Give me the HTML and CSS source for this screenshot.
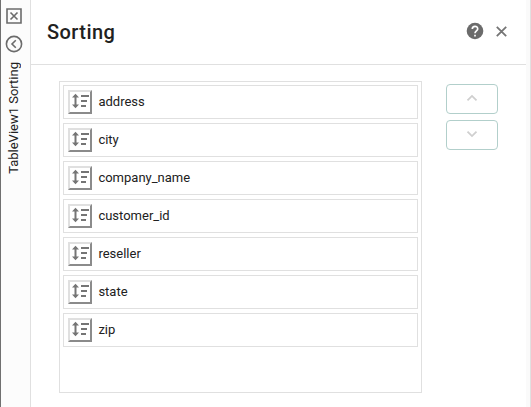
FILE: index.html
```html
<!DOCTYPE html>
<html lang="en">
<head>
<meta charset="utf-8">
<title>Sorting</title>
<link rel="stylesheet" href="styles.css">
</head>
<body>
<svg class="defs" aria-hidden="true">
  <symbol id="sort" viewBox="0 0 20 20">
    <path d="M5.500 3v12" fill="none" stroke="currentColor" stroke-width="2"/>
    <path d="M5.500 1.800L9 5.600H2zM5.500 16.200L9 12.400H2z" fill="currentColor"/>
    <path d="M11 4h8M11 9h6M11 14h5" fill="none" stroke="currentColor" stroke-width="2"/>
  </symbol>
</svg>
<div class="app">
  <aside class="rail">
    <svg class="rail-icon" width="18" height="18" viewBox="0 0 18 18"><path d="M2 2h14v14H2zM5.500 5.500l7 7M12.500 5.500l-7 7"/></svg>
    <svg class="rail-icon" width="18" height="18" viewBox="0 0 18 18"><circle cx="9" cy="9" r="7.600"/><path d="M10.800 5.200L7 9l3.800 3.800"/></svg>
    <span class="rail-title">TableView1 Sorting</span>
  </aside>
  <main class="panel">
    <header class="header">
      <h1>Sorting</h1>
      <svg class="help" width="18" height="18" viewBox="0 0 18 18"><circle cx="9" cy="9" r="8.300" fill="currentColor"/><path d="M6.300 7.100C6.300 3.400 11.700 3.400 11.700 6.900C11.700 8.900 9 8.900 9 11.300M9 12.700v1.900" fill="none" stroke="#fff" stroke-width="1.700"/></svg>
      <svg class="close" width="12" height="12" viewBox="0 0 12 12"><path d="M.8 1.800l9.400 9.400M10.200 1.800L.8 11.200"/></svg>
    </header>
    <div class="content">
      <ul class="list">
        <li><button class="sort"><svg><use href="#sort"/></svg></button>address</li>
        <li><button class="sort"><svg><use href="#sort"/></svg></button>city</li>
        <li><button class="sort"><svg><use href="#sort"/></svg></button>company_name</li>
        <li><button class="sort"><svg><use href="#sort"/></svg></button>customer_id</li>
        <li><button class="sort"><svg><use href="#sort"/></svg></button>reseller</li>
        <li><button class="sort"><svg><use href="#sort"/></svg></button>state</li>
        <li><button class="sort"><svg><use href="#sort"/></svg></button>zip</li>
      </ul>
      <div class="moves">
        <button class="move"><svg width="12" height="8" viewBox="0 0 12 8"><path d="M1.500 6.300L6 1.900l4.500 4.400"/></svg></button>
        <button class="move"><svg width="12" height="8" viewBox="0 0 12 8"><path d="M1.500 1.700L6 6.100l4.500-4.400"/></svg></button>
      </div>
    </div>
  </main>
</div>
</body>
</html>
```
FILE: styles.css
```css
* { box-sizing: border-box; }
body { margin: 0; background: #fafafa; color: #212121; font: 13px/20px Roboto, sans-serif; }
.defs { display: none; }
.app { display: flex; height: 407px; border-left: 1px solid #707070; border-right: 1px solid #e0e0e0; overflow: hidden; }
.rail { display: flex; flex-direction: column; align-items: center; gap: 10px; width: 30px; padding: 7px 4px 0 0; border-right: 1px solid #e0e0e0; background: #fcfcfc; }
.rail-icon { flex: none; fill: none; stroke: #6b6b6b; stroke-width: 1.6; }
.rail-title { margin: -1px 0 0 1px; writing-mode: vertical-rl; transform: rotate(180deg); font-size: 13px; line-height: 18px; white-space: nowrap; }
.panel { width: 495px; background: #fff; }
.header { display: flex; align-items: center; height: 65px; padding: 0 18px 2px 16px; border-bottom: 1px solid #e0e0e0; }
h1 { flex: 1; margin: 0; padding-top: 3px; font-size: 20px; font-weight: 500; line-height: 25px; letter-spacing: .45px; }
.help { color: #6b6b6b; margin-right: 12px; }
.close { fill: none; stroke: #757575; stroke-width: 1.8; }
.content { display: flex; align-items: flex-start; gap: 24px; padding: 16px 0 0 28px; }
.list { display: flex; flex-direction: column; gap: 4px; width: 363px; height: 312px; margin: 0; padding: 3px; border: 1px solid #e0e0e0; list-style: none; }
.list li { display: flex; align-items: center; gap: 6.4px; height: 34px; padding: 0 4px; border: 1px solid #e0e0e0; }
.sort { width: 24px; height: 24px; padding: 0; border: 2px solid; border-color: #e0e0e0 #8b8b8b #8b8b8b #e0e0e0; background: #fff; color: #757575; }
.sort svg { display: block; width: 20px; height: 20px; }
.moves { display: flex; flex-direction: column; gap: 6px; padding-top: 3px; }
.move { display: flex; align-items: center; justify-content: center; width: 52px; height: 30px; padding: 0 0 2px; border: 1px solid #b2cfcb; border-radius: 4px; background: #fff; }
.move svg { fill: none; stroke: #cfcfcf; stroke-width: 1.8; }
```
